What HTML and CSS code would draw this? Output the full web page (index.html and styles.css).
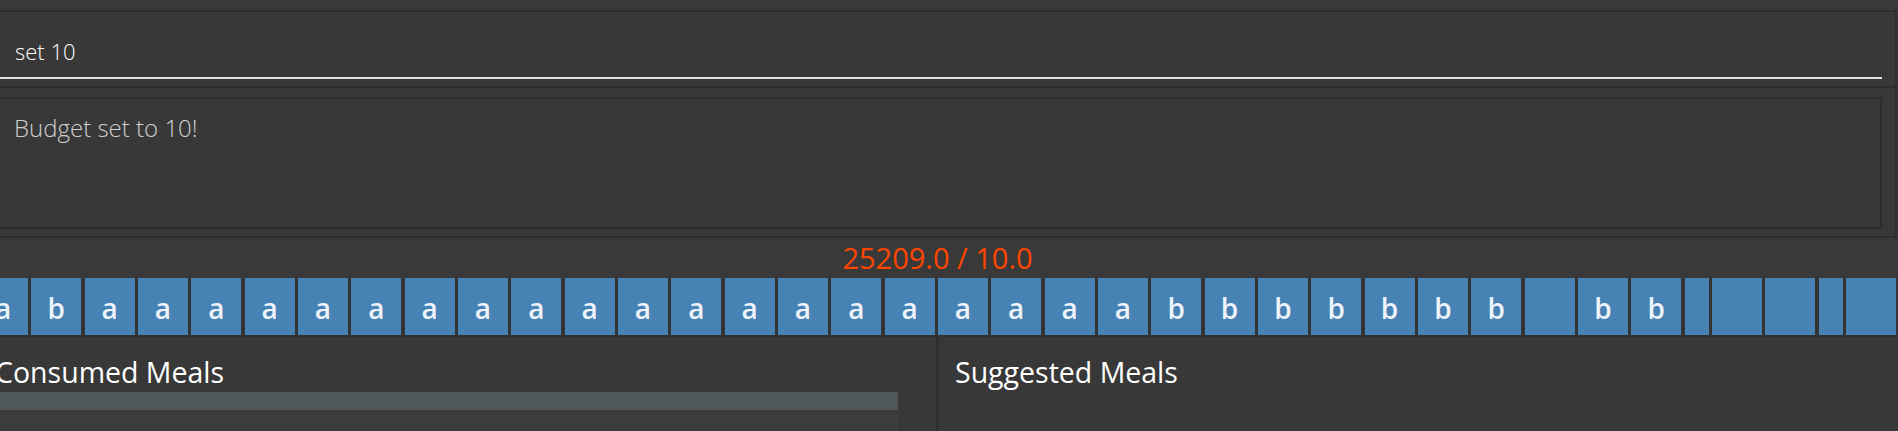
FILE: index.html
```html
<!DOCTYPE html>
<html lang="en">
<head>
<meta charset="utf-8">
<title>Budget</title>
<link rel="stylesheet" href="styles.css">
</head>
<body>
<div class="app">
  <div class="cmd-box">
    <div class="cmd-field">set 10</div>
  </div>
  <div class="result-box">
    <div class="result-inner">Budget set to 10!</div>
  </div>
  <div class="budget">
    <div class="budget-label">25209.0 / 10.0</div>
    <div class="bar">
      <div class="blk">a</div>
      <div class="blk">b</div>
      <div class="blk">a</div><div class="blk">a</div><div class="blk">a</div><div class="blk">a</div><div class="blk">a</div>
      <div class="blk">a</div><div class="blk">a</div><div class="blk">a</div><div class="blk">a</div><div class="blk">a</div>
      <div class="blk">a</div><div class="blk">a</div><div class="blk">a</div><div class="blk">a</div><div class="blk">a</div>
      <div class="blk">a</div><div class="blk">a</div><div class="blk">a</div><div class="blk">a</div><div class="blk">a</div>
      <div class="blk">b</div><div class="blk">b</div><div class="blk">b</div><div class="blk">b</div><div class="blk">b</div>
      <div class="blk">b</div><div class="blk">b</div>
      <div class="blk"></div>
      <div class="blk">b</div><div class="blk">b</div>
      <div class="blk narrow"></div>
      <div class="blk"></div>
      <div class="blk"></div>
      <div class="blk narrow"></div>
      <div class="blk"></div>
    </div>
  </div>
  <div class="lists">
    <div class="panel consumed">
      <div class="header">Consumed Meals</div>
      <div class="list"><div class="list-head"></div></div>
    </div>
    <div class="divider"></div>
    <div class="panel suggested">
      <div class="header">Suggested Meals</div>
    </div>
  </div>
</div>
</body>
</html>
```
FILE: styles.css
```css
html, body {
  margin: 0;
  padding: 0;
  background: #393939;
  overflow: hidden;
  height: 431px;
}
.app {
  margin-left: -22px;
  width: 1919px;
  padding-top: 10px;
  font-family: "Open Sans", "Noto Sans", sans-serif;
}
.cmd-box {
  box-sizing: border-box;
  height: 78px;
  border-top: 2px solid #2d2d2d;
  border-right: 2px solid #2d2d2d;
  border-bottom: 2px solid #2d2d2d;
  background: #383838;
  padding-right: 13px;
}
.cmd-field {
  box-sizing: border-box;
  height: 67px;
  border-bottom: 2px solid #e4e4e4;
  padding: 24px 0 0 37px;
  font-size: 22px;
  font-weight: 300;
  line-height: 30px;
  color: #ffffff;
}
.result-box {
  box-sizing: border-box;
  height: 150px;
  border-right: 2px solid #2d2d2d;
  border-bottom: 2px solid #2d2d2d;
  background: #383838;
  padding: 9px 13px 7px 13px;
}
.result-inner {
  box-sizing: border-box;
  height: 132px;
  border: 2px solid #2d2d2d;
  padding: 12px 0 0 21px;
  font-size: 24px;
  font-weight: 300;
  line-height: 33px;
  color: #cfcfcf;
}
.budget-label {
  height: 40px;
  line-height: 40px;
  text-align: center;
  font-size: 29px;
  color: #ff4500;
}
.bar {
  display: flex;
  gap: 3.333px;
  height: 57px;
  border-bottom: 2px solid #303030;
  background: #333333;
}
.blk {
  flex: 0 0 50px;
  display: flex;
  align-items: center;
  justify-content: center;
  background: #4682b4;
  color: #eef3f9;
  font-size: 28px;
  font-weight: 600;
  padding-top: 2px;
  box-sizing: border-box;
}
.blk.narrow {
  flex-basis: 24.333px;
}
.lists {
  display: flex;
  height: 94px;
}
.panel {
  box-sizing: border-box;
  padding-top: 16px;
  background: #383838;
}
.consumed {
  width: 958px;
  padding-left: 17px;
  padding-right: 38px;
  display: flex;
  flex-direction: column;
}
.suggested {
  flex: 1;
  padding-left: 16px;
}
.divider {
  width: 3px;
  background: #2e2e2e;
}
.header {
  font-size: 28.5px;
  line-height: 39px;
  font-weight: 400;
  color: #ffffff;
}
.list {
  margin-left: -17px;
  flex: 1;
  background: #3c3c3c;
}
.list-head {
  height: 18px;
  background: #50575b;
}
```
